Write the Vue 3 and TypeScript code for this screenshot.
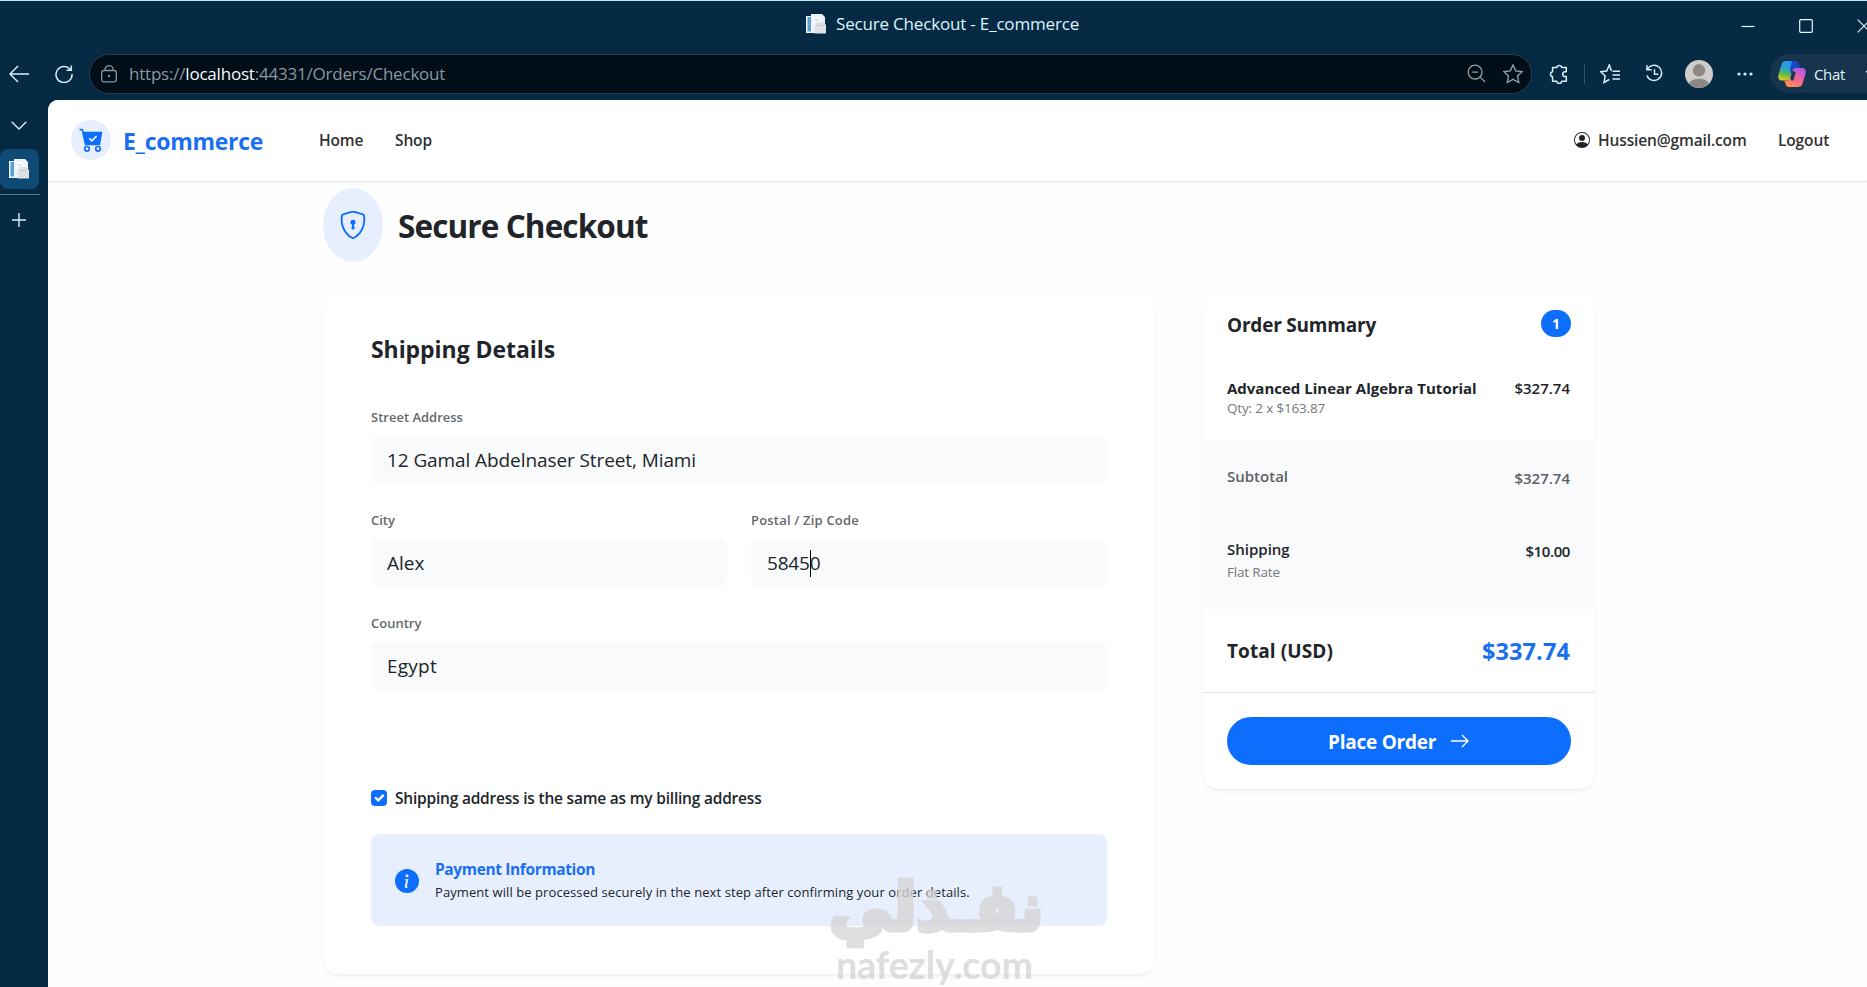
<script setup lang="ts">
interface OrderLine {
  title: string
  qty: number
  price: number
}

const line: OrderLine = { title: 'Advanced Linear Algebra Tutorial', qty: 2, price: 163.87 }
const shipping = 10
const money = (n: number): string => `$${n.toFixed(2)}`
const subtotal = line.qty * line.price
const total = subtotal + shipping
</script>

<template>
  <div class="browser">
    <header class="titlebar">
      <div class="tab-title">
        <svg class="favicon" viewBox="0 0 20 20"><path d="M0 2h5V0h11l3 3v16H0z" fill="#edf3f7" /><path d="M1.500 3h3.500v14.500H1.500z" fill="#5b9fd2" /><path d="M7 3h7v6H7z" fill="#fff" /><path d="M10 8h7l3 3v8.500H8.500V14z" fill="#dfe2e5" /><path d="M8 6h5M10 11.500h7" stroke="#c3c8cc" /></svg>
        <span class="t-title">Secure Checkout - E_commerce</span>
      </div>
      <div class="window-buttons">
        <svg width="14" height="14" viewBox="0 0 14 14"><path d="M.5 7.500h13" /></svg>
        <svg width="14" height="14" viewBox="0 0 14 14"><rect x=".7" y=".7" width="12.600" height="12.600" rx="1" /></svg>
        <svg width="14" height="14" viewBox="0 0 14 14"><path d="M.7.7l12.600 12.600M13.300.7L.7 13.300" /></svg>
      </div>
    </header>

    <div class="toolbar">
      <svg class="nav-icon back" viewBox="0 0 20 18"><path d="M9 1L1 9l8 8M1 9h19" /></svg>
      <svg class="nav-icon reload" viewBox="0 0 18 18"><path d="M15.600 5A8 8 0 1 0 17 9M16.300 .5V5.200H11.500" /></svg>
      <div class="address">
        <svg class="lock" viewBox="0 0 16 18"><rect x=".7" y="5.500" width="14.600" height="11.300" rx="2.200" /><path d="M4 5.500V4.200a4 3.500 0 0 1 8 0v1.300" /><circle class="dot" cx="8" cy="11" r="1.200" /></svg>
        <span class="url">https://<b>localhost</b>:44331/Orders/Checkout</span>
        <svg class="addr-icon" viewBox="0 0 20 20"><circle cx="8.500" cy="8.500" r="7.300" /><path d="M13.800 13.800L19 19M5.500 8.500h6" /></svg>
        <svg class="addr-icon star" viewBox="0 0 20 20"><path d="M10 1l2.800 5.900 6.300.8-4.600 4.400 1.200 6.400L10 15.400l-5.700 3.100 1.200-6.400L.9 7.700l6.300-.8z" /></svg>
      </div>
      <div class="actions">
        <svg class="a-puzzle" viewBox="0 0 20 20"><path d="M4.500 3.500h3.200a2.600 2.600 0 0 1 5.100 0H17.300v4.300h-1.200a2.400 2.400 0 0 0 0 4.800h1.200v4.700h-4.500a2.600 2.600 0 0 1-5.100 0H3.600v-4.500a2.600 2.600 0 0 1 0-5.100V3.500z" stroke-linejoin="round" /></svg>
        <i class="divider"></i>
        <svg class="a-fav" viewBox="0 0 20 20"><path d="M11.500 7L9.300 1 6.700 7l-6 .7 4.500 4.300L4 18.500l5.300-3M12.500 7.200H20M12.500 11H20M12.500 15H20" /></svg>
        <svg class="a-hist" viewBox="0 0 20 20"><path d="M2.500 5.500A8 8 0 1 1 2 12M2 1v5h5M10 5.500V10.800h4" /></svg>
        <svg class="avatar" viewBox="0 0 28 28"><circle cx="14" cy="14" r="14" fill="#cfcdca" /><circle cx="14" cy="10.300" r="6.200" fill="#8a8784" /><path d="M4 23.800a10.500 7.200 0 0 1 20 0A14 14 0 0 1 4 23.800z" fill="#8a8784" /></svg>
        <svg class="a-dots" viewBox="0 0 16 4"><circle cx="2" cy="2" r="1.600" /><circle cx="8" cy="2" r="1.600" /><circle cx="14" cy="2" r="1.600" /></svg>
      </div>
      <div class="chat">
        <svg class="copilot" viewBox="0 0 28 26">
          <defs>
            <linearGradient id="cpA" x1="0.3" y1="0" x2="0.1" y2="1"><stop offset="0" stop-color="#2397f2" /><stop offset=".35" stop-color="#2aa3c9" /><stop offset=".65" stop-color="#62b84f" /><stop offset="1" stop-color="#f7c81a" /></linearGradient>
            <linearGradient id="cpB" x1=".8" y1="0" x2=".3" y2="1"><stop offset="0" stop-color="#a85cf0" /><stop offset=".5" stop-color="#f0609a" /><stop offset="1" stop-color="#ff9148" /></linearGradient>
          </defs>
          <path d="M8 0h9c2 0 3 1.500 3.600 3.500L21.700 7H18c-2 0-3 1-3.600 3l-2 7c-.6 1.800-1.600 2.500-3.400 2.500H4C.8 19.500-.4 17 .4 14L3.300 4C4 1.300 5.500 0 8 0z" fill="url(#cpA)" />
          <path d="M14 0h3c2 0 3 1.500 3.600 3.500L21.700 7H18c-2 0-3 .8-3.600 2.800L13 14l-1-6z" fill="#1747c9" />
          <path d="M20 26h-9c-2 0-3-1.500-3.600-3.500L6.300 19.500H9c2 0 3-1 3.600-3l2.200-7C15.300 7.700 16.500 7 18 7h6c3.200 0 4.400 2.500 3.600 5.500L24.700 22c-.7 2.700-2.200 4-4.700 4z" fill="url(#cpB)" />
          <path d="M14.800 9.500L12.600 16.500 13.300 19.500h2l2.400-8z" fill="#17344f" />
        </svg>
        <span class="chat-label">Chat</span>
        <svg class="chat-caret" viewBox="0 0 12 8"><path d="M1 1l5 5 5-5" /></svg>
      </div>
    </div>

    <div class="body">
      <aside class="rail">
        <svg class="rail-chevron" viewBox="0 0 16 9"><path d="M.7.7L8 8l7.300-7.300" /></svg>
        <div class="rail-tab">
          <svg class="favicon" viewBox="0 0 20 20"><path d="M0 2h5V0h11l3 3v16H0z" fill="#edf3f7" /><path d="M1.500 3h3.500v14.500H1.500z" fill="#5b9fd2" /><path d="M7 3h7v6H7z" fill="#fff" /><path d="M10 8h7l3 3v8.500H8.500V14z" fill="#dfe2e5" /><path d="M8 6h5M10 11.500h7" stroke="#c3c8cc" /></svg>
        </div>
        <i class="rail-line"></i>
        <svg class="rail-plus" viewBox="0 0 14 14"><path d="M7 0v14M0 7h14" /></svg>
      </aside>

      <main class="page">
        <nav class="navbar">
          <div class="brand-icon">
            <svg viewBox="0 0 24 24"><path d="M.5 1.500h2.700l1 3H22.500l-2 12H6.500L3.500 3" fill="#0d6efd" stroke="#0d6efd" stroke-width="1.500" stroke-linejoin="round" /><path d="M10.300 10.300l2.600 2.500 4.700-4.800" fill="none" stroke="#fff" stroke-width="1.600" /><circle cx="8" cy="20.800" r="2.300" fill="#e7efff" stroke="#0d6efd" stroke-width="1.700" /><circle cx="19" cy="20.800" r="2.300" fill="#e7efff" stroke="#0d6efd" stroke-width="1.700" /></svg>
          </div>
          <span class="brand">E_commerce</span>
          <a class="nav-link home">Home</a>
          <a class="nav-link">Shop</a>
          <div class="account">
            <svg viewBox="0 0 16 16"><path d="M11 6a3 3 0 1 1-6 0 3 3 0 0 1 6 0" /><path fill-rule="evenodd" d="M0 8a8 8 0 1 1 16 0A8 8 0 0 1 0 8m8-7a7 7 0 0 0-5.468 11.370C3.242 11.226 4.805 10 8 10s4.757 1.225 5.468 2.370A7 7 0 0 0 8 1" /></svg>
            <a class="nav-link mail">Hussien@gmail.com</a>
            <a class="nav-link">Logout</a>
          </div>
        </nav>

        <div class="heading">
          <div class="shield">
            <svg viewBox="0 0 16 16" fill="#0d6efd"><path d="M5.338 1.590a61 61 0 0 0-2.837.856.480.480 0 0 0-.328.390c-.554 4.157.726 7.190 2.253 9.188a10.700 10.700 0 0 0 2.287 2.233c.346.244.652.420.893.533q.180.085.293.118a1 1 0 0 0 .101.025 1 1 0 0 0 .100-.025q.114-.034.294-.118c.240-.113.547-.290.893-.533a10.700 10.700 0 0 0 2.287-2.233c1.527-1.997 2.807-5.031 2.253-9.188a.480.480 0 0 0-.328-.390c-.651-.213-1.750-.560-2.837-.855C9.552 1.290 8.531 1.067 8 1.067c-.530 0-1.552.223-2.662.524zM5.072.560C6.157.265 7.310 0 8 0s1.843.265 2.928.560c1.110.300 2.229.655 2.887.870a1.540 1.540 0 0 1 1.044 1.262c.596 4.477-.787 7.795-2.465 9.990a11.800 11.800 0 0 1-2.517 2.453 7 7 0 0 1-1.048.625c-.280.132-.581.240-.829.240s-.548-.108-.829-.240a7 7 0 0 1-1.048-.625 11.800 11.800 0 0 1-2.517-2.453C1.928 10.487.545 7.169 1.141 2.692A1.540 1.540 0 0 1 2.185 1.430 63 63 0 0 1 5.072.560" /><path d="M9.500 6.500a1.500 1.500 0 0 1-1 1.415l.385 1.990a.500.500 0 0 1-.491.595h-.788a.500.500 0 0 1-.490-.595l.384-1.990a1.500 1.500 0 1 1 2-1.415" /></svg>
          </div>
          <h1>Secure Checkout</h1>
        </div>

        <div class="columns">
          <section class="card form-card">
            <h2>Shipping Details</h2>
            <div class="field">
              <label>Street Address</label>
              <div class="input"><span class="v-street">12 Gamal Abdelnaser Street, Miami</span></div>
            </div>
            <div class="split">
              <div class="field">
                <label>City</label>
                <div class="input"><span>Alex</span></div>
              </div>
              <div class="field">
                <label class="l-zip">Postal / Zip Code</label>
                <div class="input"><span class="v-zip">58450</span><i class="caret"></i></div>
              </div>
            </div>
            <div class="field">
              <label>Country</label>
              <div class="input"><span class="v-country">Egypt</span></div>
            </div>
            <div class="same">
              <span class="check"><svg viewBox="0 0 20 20"><path d="M6 10l3 3 6-6" /></svg></span>
              <span class="same-label">Shipping address is the same as my billing address</span>
            </div>
            <div class="notice">
              <svg class="info" viewBox="0 0 16 16"><path fill="#0d6efd" d="M8 16A8 8 0 1 0 8 0a8 8 0 0 0 0 16m.930-9.412-1 4.705c-.070.340.029.533.304.533.194 0 .487-.070.686-.246l-.088.416c-.287.346-.920.598-1.465.598-.703 0-1.002-.422-.808-1.319l.738-3.468c.064-.293.006-.399-.287-.470l-.451-.081.082-.381 2.290-.287zM8 5.500a1 1 0 1 1 0-2 1 1 0 0 1 0 2" /></svg>
              <div>
                <strong>Payment Information</strong>
                <p>Payment will be processed securely in the next step after confirming your order details.</p>
              </div>
            </div>
          </section>

          <section class="card summary">
            <div class="sum-head">
              <h3>Order Summary</h3>
              <span class="badge">1</span>
            </div>
            <div class="sum-item">
              <div>
                <div class="item-name">{{ line.title }}</div>
                <div class="muted">Qty: {{ line.qty }} x {{ money(line.price) }}</div>
              </div>
              <span class="amount">{{ money(subtotal) }}</span>
            </div>
            <div class="sum-grey">
              <div class="row sub">
                <span>Subtotal</span>
                <span class="amount">{{ money(subtotal) }}</span>
              </div>
              <div class="row">
                <div>
                  <div class="ship-label">Shipping</div>
                  <div class="muted">Flat Rate</div>
                </div>
                <span class="amount ten">{{ money(shipping) }}</span>
              </div>
            </div>
            <div class="sum-total">
              <span class="total-label">Total (USD)</span>
              <span class="total-value">{{ money(total) }}</span>
            </div>
            <div class="sum-foot">
              <button type="button">
                <span>Place Order</span>
                <svg viewBox="0 0 18 14"><path d="M0 7h17M11 1l6 6-6 6" /></svg>
              </button>
            </div>
          </section>
        </div>
      </main>
    </div>

    <div class="mark">
      <span class="mark-ar" lang="ar">نفـذلي</span>
      <span class="mark-en">nafezly.com</span>
    </div>
  </div>
</template>

<style>
html,
body {
  margin: 0;
  height: 100%;
  overflow: hidden;
}
</style>

<style scoped>
* {
  box-sizing: border-box;
}
.browser {
  position: relative;
  width: 1867px;
  height: 987px;
  overflow: hidden;
  display: flex;
  flex-direction: column;
  background: #062a44;
  border-top: 1px solid #bfeaf5;
  font-family: 'Open Sans', 'Noto Sans', sans-serif;
  color: #212529;
}
svg {
  display: block;
  flex: none;
}
h1, h2, h3, p {
  margin: 0;
}
span, a, h1, h2, h3, strong, p, label, .item-name {
  white-space: nowrap;
}

/* window chrome */
.titlebar {
  height: 49px;
  flex: none;
  display: flex;
  align-items: center;
  position: relative;
}
.tab-title {
  display: flex;
  align-items: center;
  margin-left: 806px;
  gap: 10px;
  height: 45px;
  align-self: flex-start;
  color: #dcf4fb;
}
.favicon {
  width: 20px;
  height: 20px;
}
.t-title {
  font-size: 17px;
  letter-spacing: -0.18px;
}
.window-buttons {
  position: absolute;
  left: 1741px;
  top: 18px;
  display: flex;
  gap: 44px;
}
.window-buttons svg {
  fill: none;
  stroke: #e3f6fd;
  stroke-width: 1.2;
}
.toolbar {
  height: 50px;
  flex: none;
  display: flex;
  align-items: center;
  padding-bottom: 3px;
}
.nav-icon {
  fill: none;
  stroke: #d7eefa;
  stroke-width: 1.5;
}
.back {
  width: 20px;
  height: 18px;
  margin-left: 9px;
}
.reload {
  width: 18px;
  height: 18px;
  margin-left: 26px;
}
.address {
  width: 1443px;
  height: 40px;
  margin-left: 16px;
  border: 1px solid #27404f;
  border-radius: 20px;
  background: #010d17;
  display: flex;
  align-items: center;
  padding-left: 11px;
}
.lock {
  width: 16px;
  height: 18px;
  fill: none;
  stroke: #8296a2;
  stroke-width: 1.3;
}
.lock .dot {
  fill: #8296a2;
  stroke: none;
}
.url {
  margin-left: 12px;
  margin-right: auto;
  font-size: 17px;
  letter-spacing: -0.21px;
  color: #8699a5;
}
.url b {
  font-weight: 400;
  color: #f3fbff;
}
.addr-icon {
  width: 19px;
  height: 19px;
  margin-right: 17px;
  fill: none;
  stroke: #8da0ab;
  stroke-width: 1.4;
}
.addr-icon.star {
  width: 20px;
  height: 20px;
  margin-right: 8px;
}
.actions {
  display: flex;
  align-items: center;
  width: 238px;
  padding-left: 17px;
}
.actions svg:not(.avatar) {
  fill: none;
  stroke: #d7eefa;
  stroke-width: 1.5;
}
.a-puzzle {
  width: 20px;
  height: 20px;
}
.divider {
  width: 1px;
  height: 20px;
  margin-left: 15px;
  background: #35546a;
}
.a-fav {
  width: 20px;
  height: 20px;
  margin-left: 15px;
}
.a-hist {
  width: 19px;
  height: 19px;
  margin-left: 25px;
}
.avatar {
  width: 28px;
  height: 28px;
  margin-left: 21px;
}
.actions svg.a-dots {
  width: 16px;
  height: 4px;
  margin-left: 24px;
  fill: #d7eefa;
  stroke: none;
}
.chat {
  flex: 1;
  height: 39px;
  display: flex;
  align-items: center;
  padding-left: 8px;
  border-radius: 20px 0 0 20px;
  background: #17344f;
  overflow: hidden;
}
.copilot {
  width: 28px;
  height: 26px;
}
.chat-label {
  margin-left: 8px;
  font-size: 15px;
  letter-spacing: -0.34px;
  color: #e3f2fa;
}
.chat-caret {
  width: 12px;
  height: 8px;
  margin-left: 20px;
  fill: none;
  stroke: #cfe4ee;
  stroke-width: 1.3;
}

/* side rail */
.body {
  flex: 1;
  min-height: 0;
  display: flex;
}
.rail {
  width: 48px;
  flex: none;
  display: flex;
  flex-direction: column;
  align-items: flex-start;
}
.rail-chevron {
  width: 16px;
  height: 9px;
  margin: 21px 0 0 11px;
  fill: none;
  stroke: #d7eefa;
  stroke-width: 1.4;
}
.rail-tab {
  width: 39px;
  height: 40px;
  margin-top: 19px;
  padding: 10px 0 0 9px;
  border-radius: 8px;
  background: #0e4a74;
}
.rail-line {
  width: 40px;
  height: 1px;
  margin-top: 5px;
  background: #5c7b90;
}
.rail-plus {
  width: 14px;
  height: 14px;
  margin: 18px 0 0 12px;
  fill: none;
  stroke: #d7eefa;
  stroke-width: 1.4;
}

/* page */
.page {
  flex: 1;
  min-width: 0;
  background: #fefefe;
  border-top-left-radius: 10px;
  overflow: hidden;
}
.navbar {
  height: 82px;
  display: flex;
  align-items: center;
  padding: 0 0 1px 23px;
  background: #fff;
  border-bottom: 1px solid #e6e8ea;
  box-shadow: 0 2px 4px rgba(0, 0, 0, 0.03);
}
.brand-icon {
  width: 40px;
  height: 40px;
  border-radius: 50%;
  background: #e7efff;
  display: grid;
  place-items: center;
}
.brand-icon svg {
  width: 24px;
  height: 24px;
}
.brand {
  margin-left: 12px;
  width: 196px;
  padding-top: 1px;
  font-size: 23px;
  font-weight: 700;
  letter-spacing: -0.3px;
  color: #1a6ff0;
}
.nav-link {
  font-size: 15.5px;
  font-weight: 600;
  letter-spacing: -0.13px;
  color: #2f3235;
}
.home {
  width: 76px;
}
.account {
  margin-left: auto;
  width: 293px;
  display: flex;
  align-items: center;
}
.account svg {
  width: 16px;
  height: 16px;
  fill: #212529;
}
.mail {
  margin-left: 8px;
  width: 180px;
}
.heading {
  display: flex;
  align-items: center;
  height: 74px;
  margin: 6px 0 0 275px;
}
.shield {
  width: 60px;
  height: 74px;
  border-radius: 50%;
  background: #e7efff;
  display: grid;
  place-items: center;
}
.shield svg {
  width: 28px;
  height: 28px;
}
h1 {
  margin-left: 15px;
  font-size: 31.5px;
  font-weight: 700;
  letter-spacing: -0.9px;
}
.columns {
  display: flex;
  align-items: flex-start;
  margin: 33px 0 0 275px;
  gap: 48px;
}
.card {
  border-radius: 16px;
  background: #fff;
  box-shadow: 0 3px 5px -1px rgba(0, 0, 0, 0.07);
}
.form-card {
  width: 832px;
  height: 679px;
  padding: 0 48px;
}
h2 {
  padding-top: 36px;
  font-size: 23px;
  line-height: 36px;
  font-weight: 700;
  letter-spacing: -0.06px;
}
.field {
  height: 103px;
}
h2 + .field {
  margin-top: 36px;
}
label {
  display: block;
  height: 33px;
  line-height: 28px;
  font-size: 13px;
  font-weight: 600;
  color: #64686c;
}
.l-zip {
  letter-spacing: 0.19px;
}
.input {
  height: 48px;
  display: flex;
  align-items: center;
  padding-left: 16px;
  border-radius: 8px;
  background: #f8fafc;
  font-size: 19px;
}
.v-street {
  letter-spacing: -0.09px;
}
.v-zip {
  letter-spacing: -0.2px;
}
.v-country {
  letter-spacing: 0.24px;
}
.split {
  display: grid;
  grid-template-columns: 1fr 1fr;
  gap: 24px;
}
.caret {
  width: 1px;
  height: 27px;
  margin-left: -10px;
  background: #000;
}
.same {
  display: flex;
  align-items: center;
  height: 24px;
  margin-top: 74px;
}
.check {
  width: 16px;
  height: 16px;
  border-radius: 4px;
  background: #0d6efd;
}
.check svg {
  fill: none;
  stroke: #fff;
  stroke-width: 3;
  stroke-linecap: round;
  stroke-linejoin: round;
}
.same-label {
  margin-left: 8px;
  font-size: 15.5px;
  font-weight: 600;
  letter-spacing: -0.21px;
}
.notice {
  display: flex;
  height: 92px;
  margin-top: 24px;
  padding: 24px;
  border-radius: 8px;
  background: #e7efff;
}
.info {
  width: 24px;
  height: 24px;
  margin: 11px 16px 0 0;
}
.notice strong {
  display: block;
  font-size: 15.5px;
  line-height: 22px;
  letter-spacing: -0.37px;
  color: #1a6ff0;
}
.notice p {
  font-size: 13px;
  line-height: 25px;
  letter-spacing: 0.08px;
}

/* summary */
.summary {
  width: 392px;
  height: 494px;
}
.sum-head {
  display: flex;
  justify-content: space-between;
  padding: 14px 24px 0;
}
h3 {
  font-size: 19px;
  line-height: 32px;
  letter-spacing: -0.21px;
}
.badge {
  width: 30px;
  height: 27px;
  margin-top: 1px;
  border-radius: 14px;
  background: #0d6efd;
  color: #fff;
  font-size: 14px;
  font-weight: 700;
  line-height: 28px;
  text-align: center;
}
.sum-item {
  display: flex;
  justify-content: space-between;
  padding: 37px 25px 0 24px;
  height: 100px;
}
.item-name,
.ship-label {
  height: 20px;
  line-height: 20px;
  font-size: 15px;
  font-weight: 700;
}
.muted {
  font-size: 13.5px;
  line-height: 20px;
  letter-spacing: -0.17px;
  color: #75797d;
}
.amount {
  font-size: 15px;
  line-height: 20px;
  font-weight: 600;
}
.sum-grey {
  height: 168px;
  padding: 25px 25px 0 24px;
  background: #f8fafc;
}
.row {
  display: flex;
  justify-content: space-between;
}
.sub {
  height: 73px;
  font-size: 15px;
  line-height: 20px;
  font-weight: 600;
  color: #5d6165;
}
.ship-label {
  height: 23px;
  font-weight: 600;
}
.sum-grey .amount {
  margin-top: 2px;
}
.ten {
  letter-spacing: -0.4px;
}
.sum-total {
  display: flex;
  justify-content: space-between;
  align-items: center;
  height: 84px;
  padding: 1px 25px 0 24px;
  border-bottom: 1px solid #dee2e6;
}
.total-label {
  font-size: 19px;
  font-weight: 700;
  letter-spacing: 0.09px;
}
.total-value {
  font-size: 23.5px;
  font-weight: 700;
  letter-spacing: 0.1px;
  color: #1a6ff0;
}
.sum-foot {
  padding: 24px;
}
button {
  width: 344px;
  height: 48px;
  padding: 0 0 0 101px;
  display: flex;
  align-items: center;
  border: 0;
  border-radius: 24px;
  background: #0d6efd;
  color: #fff;
  font-family: inherit;
  font-size: 19px;
  font-weight: 700;
  letter-spacing: -0.25px;
}
button span {
  padding-top: 2px;
}
button svg {
  width: 18px;
  height: 14px;
  margin-left: 15px;
  fill: none;
  stroke: #fff;
  stroke-width: 1.4;
}

/* watermark laid over the page */
.mark {
  position: absolute;
  left: 829px;
  top: 862px;
  width: 211px;
  color: #d6d6d6;
  opacity: 0.8;
}
.mark-ar {
  position: absolute;
  left: 0;
  top: 5px;
  font: 700 64px/80px 'DejaVu Sans', sans-serif;
  -webkit-text-stroke: 5px #d6d6d6;
  paint-order: stroke fill;
  transform: scale(0.985, 1.02);
  transform-origin: 0 60px;
}
.mark-en {
  position: absolute;
  left: 7px;
  top: 80px;
  font: 700 37.5px/44px Lato, sans-serif;
  letter-spacing: -0.05px;
}
</style>
